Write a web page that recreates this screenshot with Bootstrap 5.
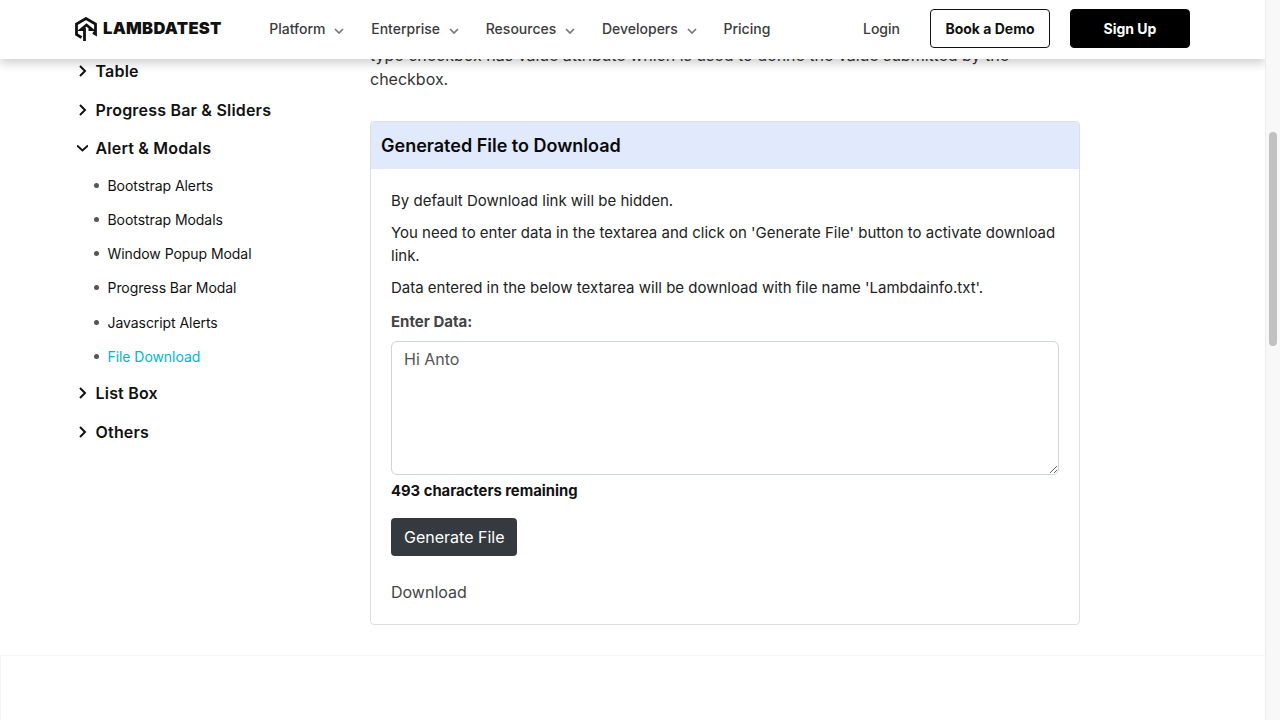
<!DOCTYPE html>
<html lang="en">
<head>
  <meta charset="UTF-8">
  <meta name="viewport" content="width=device-width, initial-scale=1.0">
  <title>File Download Demo</title>
  <link href="https://cdn.jsdelivr.net/npm/bootstrap@5.3.0/dist/css/bootstrap.min.css" rel="stylesheet">
  <style>
    html, body {
      height: 720px;
      overflow: hidden;
    }
    body {
      font-family: Inter, "Liberation Sans", sans-serif;
      color: #333;
    }
    .page-col {
      width: 1265px;
      height: 720px;
    }
    /* scrollbar */
    .fake-scroll {
      width: 15px;
      background-color: #f8f8f8;
      border-left: 1px solid #ececec;
      padding: 132px 3px 0 3px;
    }
    .fake-thumb {
      height: 214px;
      background-color: #c1c1c1;
      border-radius: 5px;
    }
    /* top bar */
    .top-bar {
      height: 59px;
      background-color: #fff;
      padding: 0 75px 2px 75px;
      box-shadow: 0 4px 10px rgba(0, 0, 0, .2);
      z-index: 10;
    }
    .logo-link {
      margin-top: 2px;
    }
    .logo-word {
      font-size: 16.5px;
      font-weight: 900;
      letter-spacing: .3px;
      color: #111;
      margin-left: 6px;
      margin-top: -2px;
      line-height: 1;
    }
    .top-link {
      font-size: 14px;
      font-weight: 500;
      color: #3b3b3b;
      text-decoration: none;
      white-space: nowrap;
    }
    .top-links {
      margin-left: 47.5px;
    }
    .top-links .top-link svg {
      margin-left: 8.7px;
      vertical-align: 0;
    }
    .top-links .top-link.has-caret {
      margin-right: 27px;
    }
    .btn-demo, .btn-signup {
      width: 120px;
      height: 39px;
      font-size: 14px;
      font-weight: 700;
      border-radius: 4px;
      padding: 0;
      line-height: 37px;
    }
    .btn-demo {
      color: #111;
      background-color: #fff;
      border: 1px solid #111;
      margin-left: 30px;
    }
    .btn-signup {
      color: #fff;
      background-color: #000;
      border: 1px solid #000;
      margin-left: 20px;
    }
    /* page body */
    .page-body {
      padding: 43px 0 0 76px;
    }
    .side-col {
      width: 294px;
      flex: none;
      padding-top: 16px;
    }
    .side-head {
      font-size: 16px;
      font-weight: 600;
      letter-spacing: .2px;
      color: #111;
      line-height: 24px;
      margin-bottom: 14.6px;
    }
    .side-head svg {
      margin-right: 7.5px;
      margin-left: 1px;
      flex: none;
    }
    .side-sub {
      margin: 0 0 14.2px 0;
      padding: 0;
      list-style: none;
    }
    .side-sub li {
      font-size: 14px;
      letter-spacing: -.06px;
      line-height: 21px;
      margin-bottom: 13.2px;
      color: #111;
      display: flex;
      align-items: center;
    }
    .side-sub li::before {
      content: "";
      width: 5px;
      height: 5px;
      border-radius: 50%;
      background-color: #555;
      margin: 0 8.5px 0 18px;
      flex: none;
    }
    .side-sub li.on {
      color: #00b6d0;
    }
    .main-col {
      width: 710px;
      flex: none;
    }
    .intro-text {
      font-size: 16px;
      line-height: 24px;
      margin-bottom: 30px;
      color: #333;
    }
    .dl-card {
      border-color: #dcdfe3;
      border-radius: 4px;
      margin-bottom: 30px;
    }
    .dl-head {
      background-color: #e1e9fc;
      border: 0;
      height: 47px;
      padding: 0 10px;
      font-size: 18px;
      font-weight: 600;
      color: #0a0a0a;
      line-height: 47px;
      border-radius: 3px 3px 0 0 !important;
    }
    .dl-body {
      padding: 20px;
      font-size: 15px;
      line-height: 23px;
      color: #222;
    }
    .dl-body p {
      margin-bottom: 9px;
    }
    .data-label {
      font-size: 15px;
      font-weight: 700;
      color: #444;
      line-height: 21px;
      margin: 12px 0 9px 0;
      display: block;
    }
    .data-box {
      height: 134px;
      font-size: 16px;
      color: #555;
      border-color: #ced4da;
      padding: 5px 12px;
    }
    .dl-body .chars-left {
      font-size: 14.8px;
      font-weight: 700;
      color: #111;
      line-height: 22px;
      margin: 5px 0 16px 0;
    }
    .btn-generate {
      background-color: #343a40;
      color: #fff;
      font-size: 16px;
      padding: 7px 13px;
      height: 38px;
      border: 0;
      border-radius: 4px;
    }
    .dl-link {
      display: block;
      margin-top: 24px;
      font-size: 16px;
      line-height: 24px;
      color: #444;
      text-decoration: none;
    }
    .foot-block {
      height: 80px;
      margin-left: -76px;
      border-top: 1px solid #f5f5f5;
      border-left: 1px solid #f5f5f5;
    }
  </style>
</head>
<body>
  <div class="d-flex">
    <div class="page-col position-relative overflow-hidden">

      <nav class="top-bar position-absolute top-0 start-0 w-100 d-flex align-items-center">
        <a class="logo-link d-flex align-items-center text-decoration-none" href="#">
          <svg width="22" height="25" viewBox="0 0 22 25" fill="none" stroke="#111" stroke-width="2.8">
            <path d="M6.500 20.500 L1.500 17.500 V7 L11 1.500 L20.500 7 V17 L18 15.500"/>
            <path d="M9.500 24 V12.500 H6 L11.500 8 L17 12.500 H13.500" stroke-linejoin="miter"/>
          </svg>
          <span class="logo-word">LAMBDATEST</span>
        </a>
        <div class="top-links d-flex align-items-center">
          <a class="top-link has-caret" href="#">Platform<svg width="10" height="6" viewBox="0 0 10 6" fill="none" stroke="#777" stroke-width="1.7"><path d="M1 1l4 4 4-4"/></svg></a>
          <a class="top-link has-caret" href="#">Enterprise<svg width="10" height="6" viewBox="0 0 10 6" fill="none" stroke="#777" stroke-width="1.7"><path d="M1 1l4 4 4-4"/></svg></a>
          <a class="top-link has-caret" href="#">Resources<svg width="10" height="6" viewBox="0 0 10 6" fill="none" stroke="#777" stroke-width="1.7"><path d="M1 1l4 4 4-4"/></svg></a>
          <a class="top-link has-caret" href="#">Developers<svg width="10" height="6" viewBox="0 0 10 6" fill="none" stroke="#777" stroke-width="1.7"><path d="M1 1l4 4 4-4"/></svg></a>
          <a class="top-link" href="#">Pricing</a>
        </div>
        <div class="ms-auto d-flex align-items-center">
          <a class="top-link" href="#">Login</a>
          <a class="btn btn-demo" href="#">Book a Demo</a>
          <a class="btn btn-signup" href="#">Sign Up</a>
        </div>
      </nav>

      <div class="page-body">
        <div class="d-flex">
          <aside class="side-col">
            <div class="side-head d-flex align-items-center"><svg width="11" height="12" viewBox="0 0 11 12" fill="none" stroke="#111" stroke-width="2"><path d="M3 1l5 5-5 5"/></svg>Table</div>
            <div class="side-head d-flex align-items-center"><svg width="11" height="12" viewBox="0 0 11 12" fill="none" stroke="#111" stroke-width="2"><path d="M3 1l5 5-5 5"/></svg>Progress Bar &amp; Sliders</div>
            <div class="side-head d-flex align-items-center"><svg width="11" height="12" viewBox="0 0 11 12" fill="none" stroke="#111" stroke-width="2"><path d="M0 3.500l5.500 5 5.500-5"/></svg>Alert &amp; Modals</div>
            <ul class="side-sub">
              <li>Bootstrap Alerts</li>
              <li>Bootstrap Modals</li>
              <li>Window Popup Modal</li>
              <li>Progress Bar Modal</li>
              <li>Javascript Alerts</li>
              <li class="on">File Download</li>
            </ul>
            <div class="side-head d-flex align-items-center"><svg width="11" height="12" viewBox="0 0 11 12" fill="none" stroke="#111" stroke-width="2"><path d="M3 1l5 5-5 5"/></svg>List Box</div>
            <div class="side-head d-flex align-items-center"><svg width="11" height="12" viewBox="0 0 11 12" fill="none" stroke="#111" stroke-width="2"><path d="M3 1l5 5-5 5"/></svg>Others</div>
          </aside>

          <main class="main-col">
            <p class="intro-text">type checkbox has value attribute which is used to define the value submitted by the checkbox.</p>
            <div class="card dl-card">
              <div class="card-header dl-head">Generated File to Download</div>
              <div class="card-body dl-body">
                <p>By default Download link will be hidden.</p>
                <p>You need to enter data in the textarea and click on 'Generate File' button to activate download link.</p>
                <p class="mb-0">Data entered in the below textarea will be download with file name 'Lambdainfo.txt'.</p>
                <label class="data-label" for="dataBox">Enter Data:</label>
                <textarea class="form-control data-box" id="dataBox">Hi Anto</textarea>
                <p class="chars-left">493 characters remaining</p>
                <button class="btn btn-generate" type="button">Generate File</button>
                <a class="dl-link" href="#">Download</a>
              </div>
            </div>
          </main>
        </div>
        <div class="foot-block"></div>
      </div>
    </div>
    <div class="fake-scroll">
      <div class="fake-thumb"></div>
    </div>
  </div>
  <script src="https://cdn.jsdelivr.net/npm/bootstrap@5.3.0/dist/js/bootstrap.bundle.min.js"></script>
</body>
</html>
